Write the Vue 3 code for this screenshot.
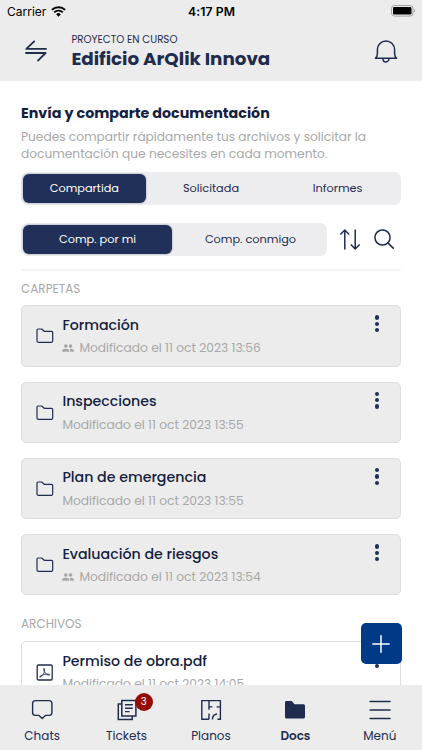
<template>
    <div class="screen">
        <div class="status-bar">
            <div class="carrier">
                <span>Carrier</span>
                <svg width="15" height="11" viewBox="0 0 15 11" fill="none">
                    <path d="M0.9 3.9A9.4 9.4 0 0 1 14.1 3.9" stroke="#000" stroke-width="2"/>
                    <path d="M3.2 6.4A6.1 6.1 0 0 1 11.8 6.4" stroke="#000" stroke-width="1.9"/>
                    <path d="M7.5 10.8L5.1 8.3A3.4 3.4 0 0 1 9.9 8.3Z" fill="#000"/>
                </svg>
            </div>
            <div class="clock">4:17 PM</div>
            <div class="battery">
                <svg width="25" height="12" viewBox="0 0 25 12" fill="none">
                    <rect x="0.5" y="0.5" width="21.5" height="10.6" rx="3" stroke="#a3a3a3"/>
                    <rect x="2" y="2" width="18.5" height="7.6" rx="1.4" fill="#000"/>
                    <path d="M23.2 4v3.7c1.3-.6 1.3-3.1 0-3.7Z" fill="#a3a3a3"/>
                </svg>
            </div>
        </div>

        <header class="header">
            <svg class="switch-icon" width="22" height="22" viewBox="0 0 22 22" fill="none">
                <path d="M9.2 1.4L1.3 8.9H21M1 13H20.6L13 20.6" stroke="#1f2c4e" stroke-width="1.8"
                      stroke-linecap="round" stroke-linejoin="round"/>
            </svg>
            <div class="project">
                <div class="project-label">PROYECTO EN CURSO</div>
                <h1 class="project-name">Edificio ArQlik Innova</h1>
            </div>
            <svg class="bell-icon" width="24" height="24" viewBox="0 0 24 24" fill="none">
                <path d="M1.4 18.2c1.5-1.3 2-2.4 2-4.5V9.6a8.5 8.5 0 0 1 17.2 0v4.1c0 2.1.5 3.2 2 4.5Z"
                      stroke="#1f2c4e" stroke-width="1.5" stroke-linejoin="round"/>
                <path d="M8.9 18.4a3.1 3.5 0 0 0 6.2 0" stroke="#1f2c4e" stroke-width="1.5"/>
            </svg>
        </header>

        <main class="content">
            <h2 class="title">Envía y comparte documentación</h2>
            <p class="description">
                Puedes compartir rápidamente tus archivos y solicitar la<br>
                documentación que necesites en cada momento.
            </p>

            <div class="segmented">
                <button
                    v-for="tab in tabs"
                    :key="tab"
                    :class="['segment', { 'is-active': tab === activeTab }]"
                    @click="activeTab = tab"
                >{{ tab }}</button>
            </div>

            <div class="filters">
                <div class="segmented segmented-small">
                    <button
                        v-for="scope in scopes"
                        :key="scope"
                        :class="['segment', { 'is-active': scope === activeScope }]"
                        @click="activeScope = scope"
                    >{{ scope }}</button>
                </div>
                <svg class="sort-icon" width="20" height="21" viewBox="0 0 20 21" fill="none">
                    <path d="M4.8 20V1.2M0.9 5.1L4.8 1L8.7 5.1M15.2 1V19.8M11.3 15.9L15.2 20L19.1 15.9"
                          stroke="#1f2c4e" stroke-width="1.5" stroke-linecap="round" stroke-linejoin="round"/>
                </svg>
                <svg class="search-icon" width="20" height="20" viewBox="0 0 20 20" fill="none">
                    <circle cx="8.5" cy="8.5" r="7.6" stroke="#1f2c4e" stroke-width="1.5"/>
                    <path d="M14 14L19.2 19.1" stroke="#1f2c4e" stroke-width="1.6" stroke-linecap="round"/>
                </svg>
            </div>

            <h3 class="section-title folders-title">CARPETAS</h3>
            <div v-for="folder in folders" :key="folder.name" class="card">
                <svg class="card-icon" width="18" height="16" viewBox="0 0 18 16" fill="none">
                    <path d="M1 2.3C1 1.5 1.4 1 2.1 1H5.7L8.2 3.3H15.5C16.3 3.3 16.7 3.7 16.7 4.5V13.1C16.7 14 16.3 14.3 15.5 14.3H2.2C1.4 14.3 1 13.9 1 13.1Z"
                          stroke="#1f2c4e" stroke-width="1.2" stroke-linejoin="round"/>
                </svg>
                <div class="card-body">
                    <div class="card-name">{{ folder.name }}</div>
                    <div class="card-date">
                        <svg v-if="folder.shared" class="people" width="12" height="8" viewBox="0 0 12 8" fill="#a6a6a6">
                            <circle cx="3.8" cy="2" r="1.8"/>
                            <circle cx="8.5" cy="2" r="1.8"/>
                            <path d="M0.2 7.8V6.3C0.2 4.2 7.3 4.2 7.3 6.3V7.8ZM8.2 7.8V6.4C8.2 5.6 7.9 5.1 7.5 4.8C9.3 4.5 11.9 5 11.9 6.3V7.8Z"/>
                        </svg>
                        <span>{{ folder.date }}</span>
                    </div>
                </div>
                <div class="dots"><i></i><i></i><i></i></div>
            </div>

            <h3 class="section-title files-title">ARCHIVOS</h3>
            <div class="card card-file">
                <svg class="card-icon" width="18" height="18" viewBox="0 0 18 18" fill="none" stroke="#1f2c4e">
                    <rect x="1.2" y="1" width="15" height="15" rx="1.2" stroke-width="1.3"/>
                    <path d="M4 13C7 11.8 9.2 7.8 8.4 5C8.2 4 7.3 4.3 7.7 5.6C8.4 8.5 10.4 11 13 11.2C14.2 11.2 13.8 10.1 12.4 10.1C9.7 10 6.8 10.7 4.6 11.9C3.2 12.8 3.5 13.7 4.4 12.8"
                          stroke-width="0.9"/>
                </svg>
                <div class="card-body">
                    <div class="card-name">Permiso de obra.pdf</div>
                    <div class="card-date"><span>Modificado el 11 oct 2023 14:05</span></div>
                </div>
                <div class="dots"><i></i><i></i><i></i></div>
            </div>
        </main>

        <button class="add-button">
            <svg width="18" height="18" viewBox="0 0 18 18">
                <path d="M9 0.8V17.2M0.8 9H17.2" stroke="#fff" stroke-width="1.5" stroke-linecap="round"/>
            </svg>
        </button>

        <nav class="tab-bar">
            <a class="tab">
                <svg width="24" height="24" viewBox="0 0 24 24" fill="none" stroke="#1f2c4e">
                    <path d="M5.5 2.6H19Q21.9 2.6 21.9 5.5V14.5Q21.9 17.4 19 17.4H15.4L12.2 20.5L9 17.4H5.5Q2.6 17.4 2.6 14.5V5.5Q2.6 2.6 5.5 2.6Z"
                          stroke-width="1.4" stroke-linejoin="round"/>
                </svg>
                <span>Chats</span>
            </a>
            <a class="tab">
                <svg width="24" height="24" viewBox="0 0 24 24" fill="none" stroke="#1f2c4e">
                    <path d="M6.8 2.5H20.9V17.9H6.8ZM6.8 6H3.3V21.5H17.2V18" stroke-width="1.5"/>
                    <path d="M10 6.8H17.8M10 10.2H17.8M10 13.6H14.5" stroke-width="1.4"/>
                </svg>
                <span>Tickets</span>
                <b class="badge">3</b>
            </a>
            <a class="tab">
                <svg width="24" height="24" viewBox="0 0 24 24" fill="none" stroke="#1f2c4e" stroke-width="1.4">
                    <path d="M10 21.3H2.8V2.6H21.4V21.3H18.4M10 2.6V11.8M10 8.9H13.4M17.6 8.9H21.4M10 15.6V21.3M13.5 21.5C13.3 18.3 15 16.4 18 16"/>
                </svg>
                <span>Planos</span>
            </a>
            <a class="tab is-current">
                <svg width="24" height="24" viewBox="0 0 24 24" fill="#1f2c4e">
                    <path d="M2 4.3Q2 3 3.3 3H8.8L11.5 6.2H20.5Q22 6.2 22 7.7V19Q22 20.5 20.5 20.5H3.5Q2 20.5 2 19Z"/>
                </svg>
                <span>Docs</span>
            </a>
            <a class="tab">
                <svg width="24" height="24" viewBox="0 0 24 24">
                    <path d="M2.1 3.5H22M2.1 12H22M2.1 20.5H22" stroke="#1f2c4e" stroke-width="1.5" stroke-linecap="round"/>
                </svg>
                <span>Menú</span>
            </a>
        </nav>
    </div>
</template>

<script setup>
import { ref } from 'vue'

const tabs = ['Compartida', 'Solicitada', 'Informes']
const activeTab = ref('Compartida')

const scopes = ['Comp. por mi', 'Comp. conmigo']
const activeScope = ref('Comp. por mi')

const folders = [
    { name: 'Formación', date: 'Modificado el 11 oct 2023 13:56', shared: true },
    { name: 'Inspecciones', date: 'Modificado el 11 oct 2023 13:55', shared: false },
    { name: 'Plan de emergencia', date: 'Modificado el 11 oct 2023 13:55', shared: false },
    { name: 'Evaluación de riesgos', date: 'Modificado el 11 oct 2023 13:54', shared: true }
]
</script>

<style>
body {
    background: #fff;
}
</style>

<style scoped>
.screen {
    position: relative;
    width: 422px;
    height: 750px;
    overflow: hidden;
    display: flex;
    flex-direction: column;
    font-family: Poppins, Inter, sans-serif;
    color: #1f2c4e;
    background: #fff;
}

.screen * {
    box-sizing: border-box;
}

h1, h2, h3, p {
    margin: 0;
}

svg {
    display: block;
    flex: none;
}

button {
    border: none;
    padding: 0;
    font-family: inherit;
    cursor: pointer;
}

.status-bar {
    flex: none;
    height: 22px;
    padding: 0 6px 0 7px;
    display: grid;
    grid-template-columns: 1fr auto 1fr;
    align-items: center;
    background: #ececec;
    font-family: Inter, sans-serif;
    font-size: 12px;
    color: #000;
}

.carrier {
    display: flex;
    align-items: center;
    gap: 5px;
}

.clock {
    font-size: 12.2px;
    font-weight: 600;
    letter-spacing: 0.1px;
}

.battery {
    display: flex;
    justify-content: flex-end;
}

.header {
    flex: none;
    height: 59px;
    padding: 0 24px 0 25px;
    display: flex;
    background: #ececec;
}

.switch-icon {
    margin-top: 18px;
}

.project {
    flex: 1;
    margin-left: 24.4px;
    padding-top: 10px;
    white-space: nowrap;
}

.project-label {
    font-size: 10.25px;
    line-height: 15px;
}

.project-name {
    font-size: 18.3px;
    line-height: 24px;
    font-weight: 700;
}

.bell-icon {
    margin-top: 18px;
}

.content {
    flex: 1;
    min-height: 0;
    overflow: hidden;
    padding: 20.5px 21px 0;
    white-space: nowrap;
}

.title {
    font-size: 14.25px;
    line-height: 22px;
    font-weight: 700;
    color: #14203f;
}

.description {
    margin-top: 4px;
    font-size: 12.2px;
    line-height: 17px;
    color: #a8a8a8;
}

.segmented {
    display: flex;
    height: 33px;
    margin-top: 10px;
    border-radius: 7px;
    background: #ededf0;
}

.segment {
    flex: 1;
    height: 29px;
    margin: 2px;
    border-radius: 6px;
    background: none;
    font-size: 11.3px;
    color: #1f2c4e;
}

.segment.is-active {
    background: #213058;
    color: #fff;
    box-shadow: 0 0 2px rgba(33, 48, 88, 0.5);
}

.filters {
    display: flex;
    align-items: center;
    height: 48px;
    margin-top: 18px;
    padding-bottom: 13px;
    border-bottom: 2px solid #f4f4f4;
}

.segmented-small {
    width: 306px;
    margin-top: 0;
}

.sort-icon {
    margin-left: 12.5px;
}

.search-icon {
    margin-left: 14.5px;
}

.section-title {
    font-size: 12px;
    line-height: 18px;
    font-weight: 400;
    color: #a8a8a8;
}

.folders-title {
    margin: 9px 0 7.8px;
}

.files-title {
    margin: 19.5px 0 8.2px;
}

.card {
    display: flex;
    height: 61.3px;
    border: 1px solid #dedede;
    border-radius: 5px;
    background: #ececec;
}

.card + .card {
    margin-top: 15px;
}

.card-file {
    background: #fff;
}

.card-icon {
    margin: 22px 0 0 13.6px;
}

.card-body {
    flex: 1;
    margin-left: 8.8px;
    padding-top: 7.5px;
}

.card-name {
    font-size: 14.2px;
    line-height: 22px;
    font-weight: 500;
    color: #14203f;
}

.card-date {
    display: flex;
    align-items: center;
    margin-top: 2.5px;
    font-size: 12.25px;
    line-height: 19px;
    color: #a8a8a8;
}

.people {
    margin-right: 5px;
}

.dots {
    display: flex;
    flex-direction: column;
    gap: 2px;
    margin: 9px 21px 0 0;
}

.dots i {
    width: 4.4px;
    height: 4.4px;
    border-radius: 50%;
    background: #213058;
}

/* Floats over the list, just above the tab bar */
.add-button {
    position: absolute;
    top: 623px;
    right: 20.5px;
    width: 41px;
    height: 41px;
    display: flex;
    align-items: center;
    justify-content: center;
    border-radius: 5px;
    background: #003a87;
}

.tab-bar {
    flex: none;
    height: 65.5px;
    display: grid;
    grid-template-columns: repeat(5, 1fr);
    background: #ececec;
}

.tab {
    position: relative;
    display: flex;
    flex-direction: column;
    align-items: center;
    padding-top: 13px;
    font-size: 12px;
    line-height: 18px;
}

.tab span {
    margin-top: 5px;
}

.tab.is-current {
    font-weight: 600;
}

.badge {
    position: absolute;
    top: 8px;
    left: 50%;
    width: 18px;
    height: 18px;
    margin-left: 8px;
    border-radius: 50%;
    background: #950b05;
    color: #fff;
    font-size: 10px;
    font-weight: 400;
    text-align: center;
}
</style>
